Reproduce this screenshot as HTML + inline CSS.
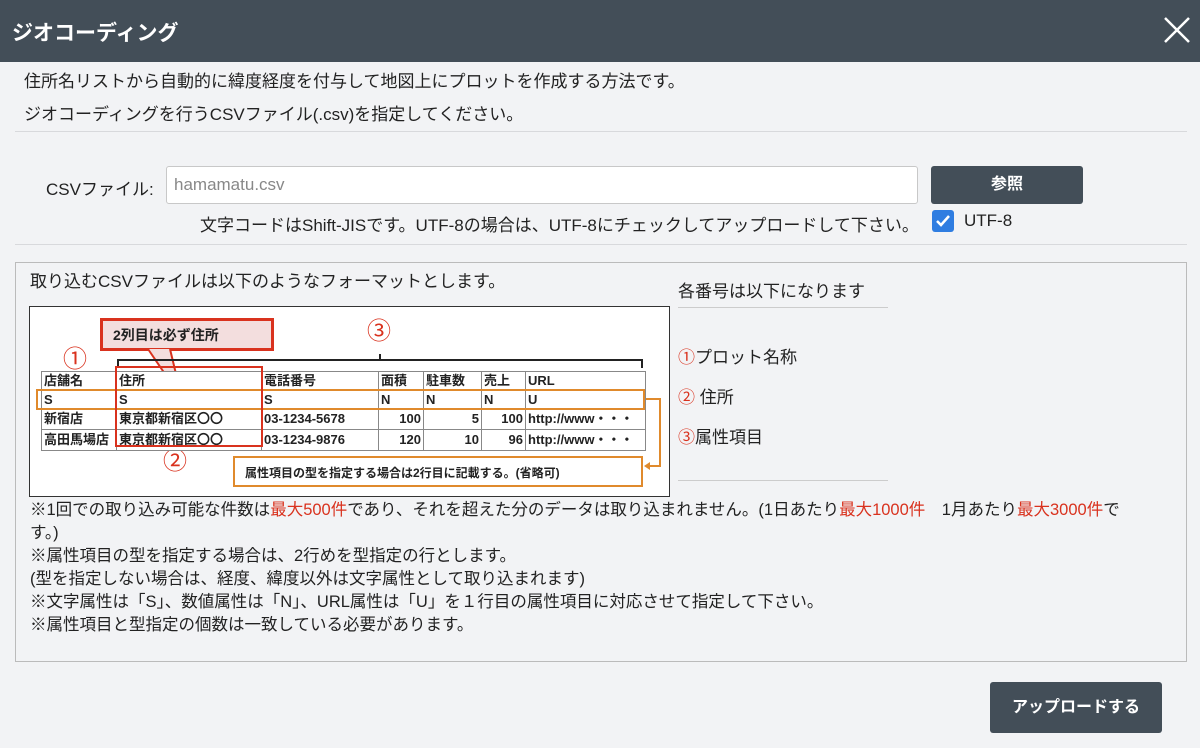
<!DOCTYPE html>
<html><head><meta charset="utf-8"><style>
*{margin:0;padding:0;box-sizing:border-box}
body{width:1200px;height:748px;background:#f2f3f5;font-family:"Liberation Sans","Noto Sans CJK JP",sans-serif;color:#222;position:relative;overflow:hidden;font-size:17px}
.a{position:absolute;white-space:nowrap}
.hdr{position:absolute;left:0;top:0;width:1200px;height:62px;background:#434e58;color:#fff;font-size:21px;font-weight:bold;padding:17px 0 0 12px}
.hr{position:absolute;left:15px;width:1172px;height:1px;background:#d8d9dc}
.r{color:#d9321e}
.btn{position:absolute;background:#434e58;color:#fff;font-weight:bold;border-radius:3px;text-align:center}
table{table-layout:fixed;border-collapse:collapse;background:#fff}
td{border:1px solid #888;padding:0 2px;font-size:13px;font-weight:bold;white-space:nowrap;overflow:hidden;line-height:16px}
</style></head><body>
<div class="hdr">ジオコーディング</div>
<svg class="a" style="left:1163px;top:16px" width="28" height="28"><path d="M2 2L26 26M26 2L2 26" stroke="#fff" stroke-width="2.5"/></svg>
<div class="a" style="left:24px;top:67px">住所名リストから自動的に緯度経度を付与して地図上にプロットを作成する方法です。</div>
<div class="a" style="left:24px;top:100px">ジオコーディングを行うCSVファイル(.csv)を指定してください。</div>
<div class="hr" style="top:131px"></div>
<div class="a" style="left:46px;top:175px">CSVファイル:</div>
<div class="a" style="left:166px;top:166px;width:752px;height:38px;background:#fff;border:1px solid #c8c8c8;border-radius:3px;padding:8px 7px;color:#888;font-size:17px">hamamatu.csv</div>
<div class="btn" style="left:931px;top:166px;width:152px;height:38px;line-height:38px;font-size:16px">参照</div>
<div class="a" style="left:200px;top:211px">文字コードはShift-JISです。UTF-8の場合は、UTF-8にチェックしてアップロードして下さい。</div>
<div class="a" style="left:932px;top:210px;width:22px;height:22px;background:#2f7de1;border-radius:3px"><svg width="22" height="22"><path d="M5 11l4 4 8-9" stroke="#fff" stroke-width="2.5" fill="none"/></svg></div>
<div class="a" style="left:964px;top:211px">UTF-8</div>
<div class="hr" style="top:244px"></div>
<div class="a" style="left:15px;top:262px;width:1172px;height:400px;border:1px solid #bbb"></div>
<div class="a" style="left:30px;top:267px">取り込むCSVファイルは以下のようなフォーマットとします。</div>
<div class="a" style="left:678px;top:277px">各番号は以下になります</div>
<div class="a" style="left:678px;top:307px;width:210px;height:1px;background:#ccc"></div>
<div class="a" style="left:678px;top:343px"><span class="r">①</span>プロット名称</div>
<div class="a" style="left:678px;top:383px"><span class="r">②</span> 住所</div>
<div class="a" style="left:678px;top:423px"><span class="r">③</span>属性項目</div>
<div class="a" style="left:678px;top:480px;width:210px;height:1px;background:#ccc"></div>
<div class="a" style="left:29px;top:306px;width:641px;height:191px;background:#fff;border:1px solid #333">
<div class="a" style="left:70px;top:11px;width:174px;height:33px;background:#f3dede;border:3px solid #d9321e;font-weight:bold;font-size:14px;padding:4px 0 0 10px">2列目は必ず住所</div>
<svg class="a" style="left:0;top:0" width="640" height="190"><path d="M118 42L152 92L140 42" fill="#f3dede" stroke="#d9321e" stroke-width="2"/><path d="M88 61V53H350V47M350 53H612V61" fill="none" stroke="#222" stroke-width="2"/><path d="M614 92H630V159H616" fill="none" stroke="#e08a2c" stroke-width="2"/><path d="M614 159l6-4v8z" fill="#e08a2c"/></svg>
<div class="a r" style="left:33px;top:32px;font-size:24px">①</div>
<div class="a r" style="left:337px;top:4px;font-size:24px">③</div>
<div class="a r" style="left:133px;top:134px;font-size:24px">②</div>
<table class="a" style="left:11px;top:64px;width:604px">
<colgroup><col style="width:75px"><col style="width:145px"><col style="width:117px"><col style="width:45px"><col style="width:58px"><col style="width:44px"><col style="width:120px"></colgroup>
<tr style="height:19px"><td>店舗名</td><td>住所</td><td>電話番号</td><td>面積</td><td>駐車数</td><td>売上</td><td>URL</td></tr>
<tr style="height:18px"><td>S</td><td>S</td><td>S</td><td>N</td><td>N</td><td>N</td><td>U</td></tr>
<tr style="height:21px"><td>新宿店</td><td>東京都新宿区〇〇</td><td>03-1234-5678</td><td style="text-align:right">100</td><td style="text-align:right">5</td><td style="text-align:right">100</td><td>http://www・・・</td></tr>
<tr style="height:21px"><td>高田馬場店</td><td>東京都新宿区〇〇</td><td>03-1234-9876</td><td style="text-align:right">120</td><td style="text-align:right">10</td><td style="text-align:right">96</td><td>http://www・・・</td></tr>
</table>
<div class="a" style="left:6px;top:82px;width:609px;height:21px;border:2px solid #e08a2c"></div>
<div class="a" style="left:85px;top:59px;width:148px;height:81px;border:2px solid #d9321e"></div>
<div class="a" style="left:203px;top:149px;width:410px;height:31px;border:2px solid #e08a2c;font-size:12px;font-weight:bold;padding:6px 0 0 10px">属性項目の型を指定する場合は2行目に記載する。(省略可)</div>
</div>
<div class="a" style="left:30px;top:499px;line-height:23px;font-size:16.5px">※1回での取り込み可能な件数は<span class="r">最大500件</span>であり、それを超えた分のデータは取り込まれません。(1日あたり<span class="r">最大1000件</span>　1月あたり<span class="r">最大3000件</span>で<br>す。)<br>※属性項目の型を指定する場合は、2行めを型指定の行とします。<br>(型を指定しない場合は、経度、緯度以外は文字属性として取り込まれます)<br>※文字属性は「S」、数値属性は「N」、URL属性は「U」を１行目の属性項目に対応させて指定して下さい。<br>※属性項目と型指定の個数は一致している必要があります。</div>
<div class="btn" style="left:990px;top:682px;width:172px;height:51px;line-height:51px;font-size:16px">アップロードする</div>
</body></html>
